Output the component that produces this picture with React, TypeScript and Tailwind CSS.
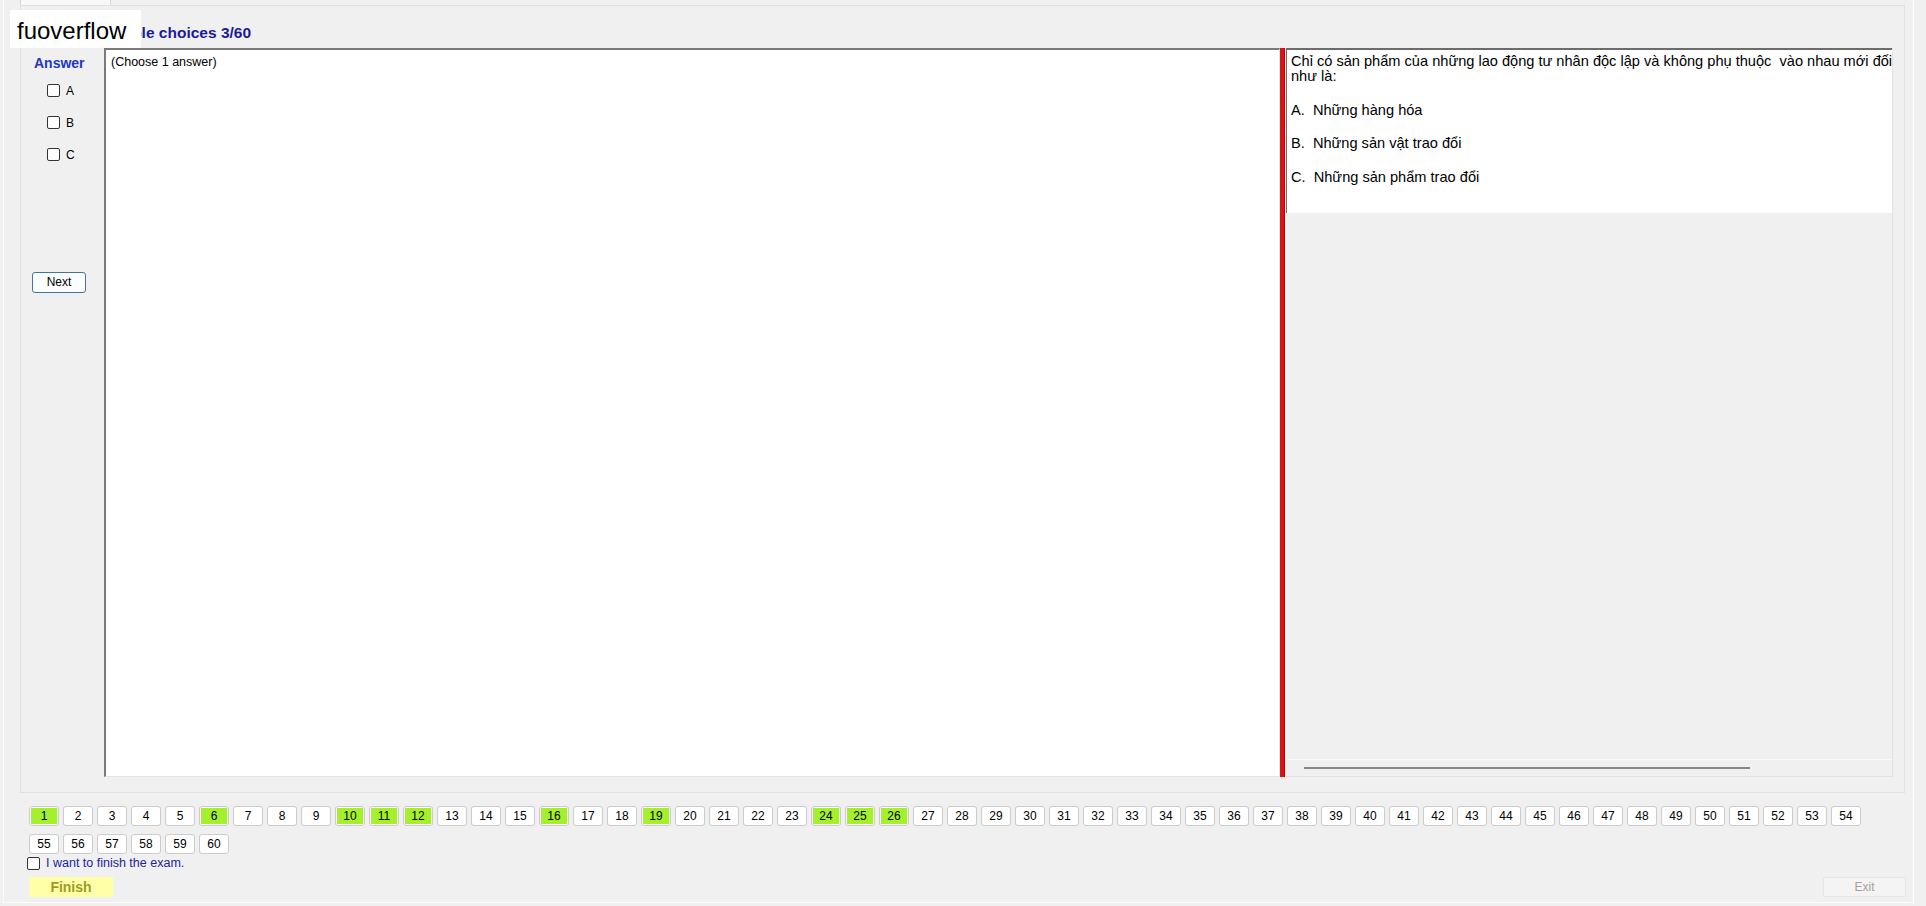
import React from "react";

const DONE = new Set([1, 6, 10, 11, 12, 16, 19, 24, 25, 26]);
const QUESTIONS = Array.from({ length: 60 }, (_, i) => i + 1);

function Box() {
  return <span className="block w-[13px] h-[13px] rounded-[2px] border border-[#333333] bg-white shrink-0" />;
}

function NumButton({ n }: { n: number }) {
  const done = DONE.has(n);
  return (
    <div className="w-[30px] h-[20px] rounded-[3px] border border-[#cccccc] bg-white p-[1px] flex">
      <div
        className={
          done
            ? "flex-1 bg-[#a5f02d] flex items-center justify-center text-[12px] leading-none text-black"
            : "flex-1 flex items-center justify-center text-[12px] leading-none text-black"
        }
      >
        {n}
      </div>
    </div>
  );
}

function AnswerOption({ label }: { label: string }) {
  return (
    <div className="flex items-center h-[13px] pl-[26px] gap-[6px]">
      <Box />
      <span className="text-[12px] leading-none">{label}</span>
    </div>
  );
}

export default function App() {
  return (
    <div className="relative w-[1926px] h-[906px] overflow-hidden bg-[#f0f0f0] text-black font-['Liberation_Sans',Arial,sans-serif]">
      <div className="ml-[3px] w-[1911px] h-[903px] border-l border-r border-b border-[#fbfbfb] flex flex-col">
        {/* tab header strip */}
        <div className="h-[5px] pl-[16px] flex">
          <div className="w-[91px] h-[5px] border-l border-r border-[#d6d6d6] bg-[#f8f8f8]" />
        </div>

        {/* tab page */}
        <div className="ml-[16px] w-[1885px] h-[788px] border border-[#e0e0e0] flex flex-col">
          <div className="h-[42px] pt-[15px] pl-[75px]">
            <span className="text-[15.5px] leading-[18px] font-bold text-[#1b1b9c]">Multiple choices 3/60</span>
          </div>

          <div className="flex h-[729px]">
            {/* answer column */}
            <div className="w-[83px] flex flex-col">
              <div className="mt-[7px] pl-[13px] text-[14px] leading-[16px] font-bold text-[#2236c4]">Answer</div>
              <div className="mt-[13px] flex flex-col gap-[19px]">
                <AnswerOption label="A" />
                <AnswerOption label="B" />
                <AnswerOption label="C" />
              </div>
              <div className="mt-[108px] pl-[11px]">
                <button className="w-[54px] h-[21px] rounded-[3px] border border-[#3f74a3] bg-[#fbfdff] text-[12px] leading-none text-black">
                  Next
                </button>
              </div>
            </div>

            {/* answer sheet */}
            <div className="w-[1176px] h-full bg-white border-t-2 border-l-2 border-[#7a7a7a] border-r border-b border-r-[#e4e4e4] border-b-[#e4e4e4] pt-[5px] pl-[5px]">
              <div className="text-[12.5px] leading-[15px]">(Choose 1 answer)</div>
            </div>

            {/* splitter */}
            <div className="w-[5px] h-full bg-[#da1414] border-r border-[#9c0d0d]" />

            {/* question panel */}
            <div className="w-[608px] h-full flex flex-col border-r border-b border-[#e2e2e2]">
              <div className="ml-[1px] h-[165px] bg-white border-t-2 border-l border-[#6c6c6c] pt-[4px] pl-[4px] overflow-hidden text-[14.6px] leading-[15px]">
                <div className="whitespace-pre">Chỉ có sản phẩm của những lao động tư nhân độc lập và không phụ thuộc  vào nhau mới đối diện với nhau</div>
                <div>như là:</div>
                <div className="mt-[18.5px] whitespace-pre">A.  Những hàng hóa</div>
                <div className="mt-[18.5px] whitespace-pre">B.  Những sản vật trao đổi</div>
                <div className="mt-[18.5px] whitespace-pre">C.  Những sản phẩm trao đổi</div>
              </div>
              <div className="flex-1 ml-[1px] border-l border-[#fafafa]" />
              <div className="h-[17px] ml-[1px] border-t border-[#fafafa]">
                <div className="ml-[18px] mt-[7px] w-[446px] h-[2px] bg-[#858585]" />
              </div>
            </div>
          </div>
        </div>

        {/* question navigator */}
        <div className="pt-[13px] pl-[25px] flex flex-col">
          <div className="w-[1840px] flex flex-wrap gap-x-[4px] gap-y-[8px]">
            {QUESTIONS.map((n) => (
              <NumButton key={n} n={n} />
            ))}
          </div>
          <div className="ml-[-2px] h-[18px] flex items-center gap-[6px]">
            <Box />
            <span className="text-[12.5px] leading-none text-[#23239a]">I want to finish the exam.</span>
          </div>
          <div className="mt-[5px] w-[1877px] flex justify-between">
            <button className="w-[84px] h-[20px] bg-[#ffffa8] text-[14px] leading-none font-bold text-[#9c9c22]">
              Finish
            </button>
            <button className="w-[83px] h-[20px] rounded-[2px] border border-[#e6e6e6] bg-[#f4f4f4] text-[12px] leading-none text-[#a2a2a2]">
              Exit
            </button>
          </div>
        </div>
      </div>

      {/* watermark label */}
      <div className="absolute left-[10px] top-[10px] w-[131px] h-[38px] bg-white pl-[7px] pt-[3px] text-[24px] leading-[35px] text-black">
        fuoverflow
      </div>
    </div>
  );
}
